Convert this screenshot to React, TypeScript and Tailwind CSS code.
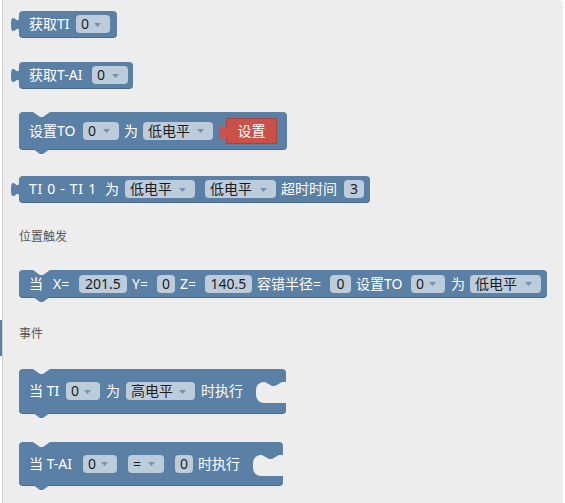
import React from "react";

const FONT = { fontFamily: '"Noto Sans", "Noto Sans CJK SC", sans-serif' };

function Arrow() {
  return (
    <svg width="7" height="4" viewBox="0 0 7 4" className="mt-[1px]">
      <path d="M0 0 L7 0 L3.5 4 Z" fill="#7591b0" />
    </svg>
  );
}

function Txt({ children, w, l = "" }: { children: React.ReactNode; w: string; l?: string }) {
  return <span className={`shrink-0 whitespace-pre ${w} ${l}`}>{children}</span>;
}

function Drop({ label, w, l = "" }: { label: string; w: string; l?: string }) {
  return (
    <span
      className={`inline-flex h-[18px] shrink-0 items-center justify-between rounded-[4px] bg-[#bdccdb] pl-[5px] pr-[9px] text-[#1c1c1c] ${w} ${l}`}
    >
      <span>{label}</span>
      <Arrow />
    </span>
  );
}

function Num({ value, w, l = "" }: { value: string; w: string; l?: string }) {
  return (
    <span
      className={`inline-flex h-[18px] shrink-0 items-center justify-center rounded-[4px] bg-[#bdccdb] text-[#1c1c1c] ${w} ${l}`}
    >
      {value}
    </span>
  );
}

// left puzzle tab (output connection)
function OutTab({ color }: { color: string }) {
  return (
    <svg className="absolute left-[-8px] top-[6px]" width="9" height="15" viewBox="0 0 9 15">
      <path d="M9 0 L8 0 C8 10 0 -8 0 7.5 C0 23 8 5 8 15 L9 15 Z" fill={color} />
    </svg>
  );
}

// notch on top (previous connection) and tab at the bottom (next connection)
function TopNotch() {
  return (
    <svg className="absolute left-[14px] top-0" width="17" height="5" viewBox="0 0 17 5">
      <path d="M0 0 L7 5 L10 5 L17 0 Z" fill="#ededed" />
    </svg>
  );
}

function BottomTab() {
  return (
    <svg className="absolute left-[14px] bottom-[-5px]" width="17" height="5" viewBox="0 0 17 5">
      <path d="M0 0 L7 5 L10 5 L17 0 Z" fill="#5b80a5" />
    </svg>
  );
}

function StatementGap() {
  return (
    <div className="absolute right-0 top-[13px] h-[21px] w-[30px] rounded-l-[8px] bg-[#ededed]">
      <svg className="absolute left-[9px] top-0" width="17" height="5" viewBox="0 0 17 5">
        <path d="M0 0 L7 4 L10 4 L17 0 Z" fill="#5b80a5" />
      </svg>
    </div>
  );
}

const block =
  "relative inline-flex items-center rounded-[4px] bg-[#5b80a5] pl-[10px] text-white shadow-[0_1px_0_#46698c]";

export default function App() {
  return (
    <div className="h-[503px] w-[565px] bg-white text-[14px] leading-none" style={FONT}>
      <div className="relative ml-[2px] h-[503px] w-[561px] rounded-tr-[4px] border-l border-[#cfcfcf] bg-[#ededed] pl-[16px]">
        <div className="absolute left-[-3px] top-[320px] h-[36px] w-[2px] bg-[#5b80a5]" />

        <div className="flex flex-col items-start">
          {/* 获取TI */}
          <div className={`${block} mt-[11px] h-[26px] pr-[7px]`}>
            <OutTab color="#5b80a5" />
            <Txt w="w-[39px]">获取TI</Txt>
            <Drop label="0" w="w-[34px]" l="ml-[8px]" />
          </div>

          {/* 获取T-AI */}
          <div className={`${block} mt-[25px] h-[26px] pr-[5px]`}>
            <OutTab color="#5b80a5" />
            <Txt w="w-[56px]">获取T-AI</Txt>
            <Drop label="0" w="w-[36px]" l="ml-[7px]" />
          </div>

          {/* 设置TO */}
          <div className={`${block} mt-[24px] h-[37px] pr-[10px]`}>
            <TopNotch />
            <Txt w="w-[47px]">设置TO</Txt>
            <Drop label="0" w="w-[36px]" l="ml-[7px]" />
            <Txt w="w-[14px]" l="ml-[5px]">为</Txt>
            <Drop label="低电平" w="w-[70px]" l="ml-[5px]" />
            <span className="relative ml-[13px] flex h-[26px] w-[51px] items-center justify-center border border-[#a8423b] bg-[#c9514a]">
              <OutTab color="#c9514a" />
              设置
            </span>
            <BottomTab />
          </div>

          {/* TI 0 - TI 1 */}
          <div className={`${block} mt-[27px] h-[26px] pr-[6px]`}>
            <OutTab color="#5b80a5" />
            <Txt w="w-[63px]" l="tracking-[0.7px]">TI 0 - TI 1</Txt>
            <Txt w="w-[14px]" l="ml-[13px]">为</Txt>
            <Drop label="低电平" w="w-[70px]" l="ml-[6px]" />
            <Drop label="低电平" w="w-[71px]" l="ml-[10px]" />
            <Txt w="w-[54px]" l="ml-[5px]">超时时间</Txt>
            <Num value="3" w="w-[20px]" l="ml-[9px]" />
          </div>

          <div className="mt-[27px] text-[12px] leading-[16px] text-[#575757]">位置触发</div>

          {/* 当 X= ... */}
          <div className={`${block} mt-[25px] h-[27px] pr-[6px]`}>
            <TopNotch />
            <Txt w="w-[14px]">当</Txt>
            <Txt w="w-[19px]" l="ml-[10px]">X=</Txt>
            <Num value="201.5" w="w-[48px]" l="ml-[7px]" />
            <Txt w="w-[18px]" l="ml-[5px]">Y=</Txt>
            <Num value="0" w="w-[18px]" l="ml-[7px]" />
            <Txt w="w-[18px]" l="ml-[5px]">Z=</Txt>
            <Num value="140.5" w="w-[47px]" l="ml-[7px]" />
            <Txt w="w-[66px]" l="ml-[5px]">容错半径=</Txt>
            <Num value="0" w="w-[21px]" l="ml-[7px]" />
            <Txt w="w-[46px]" l="ml-[5px]">设置TO</Txt>
            <Drop label="0" w="w-[34px]" l="ml-[9px]" />
            <Txt w="w-[14px]" l="ml-[6px]">为</Txt>
            <Drop label="低电平" w="w-[71px]" l="ml-[5px]" />
            <BottomTab />
          </div>

          <div className="mt-[29px] text-[12px] leading-[16px] text-[#575757]">事件</div>

          {/* 当 TI */}
          <div className={`${block} mt-[27px] h-[44px] pr-[43px]`}>
            <TopNotch />
            <Txt w="w-[30px]">当 TI</Txt>
            <Drop label="0" w="w-[34px]" l="ml-[7px]" />
            <Txt w="w-[14px]" l="ml-[6px]">为</Txt>
            <Drop label="高电平" w="w-[69px]" l="ml-[6px]" />
            <Txt w="w-[42px]" l="ml-[6px]">时执行</Txt>
            <StatementGap />
            <BottomTab />
          </div>

          {/* 当 T-AI */}
          <div className={`${block} mt-[29px] h-[43px] pr-[43px]`}>
            <TopNotch />
            <Txt w="w-[45px]">当 T-AI</Txt>
            <Drop label="0" w="w-[34px]" l="ml-[9px]" />
            <Drop label="=" w="w-[36px]" l="ml-[11px]" />
            <Num value="0" w="w-[18px]" l="ml-[11px]" />
            <Txt w="w-[42px]" l="ml-[5px]">时执行</Txt>
            <StatementGap />
            <BottomTab />
          </div>
        </div>
      </div>
    </div>
  );
}
